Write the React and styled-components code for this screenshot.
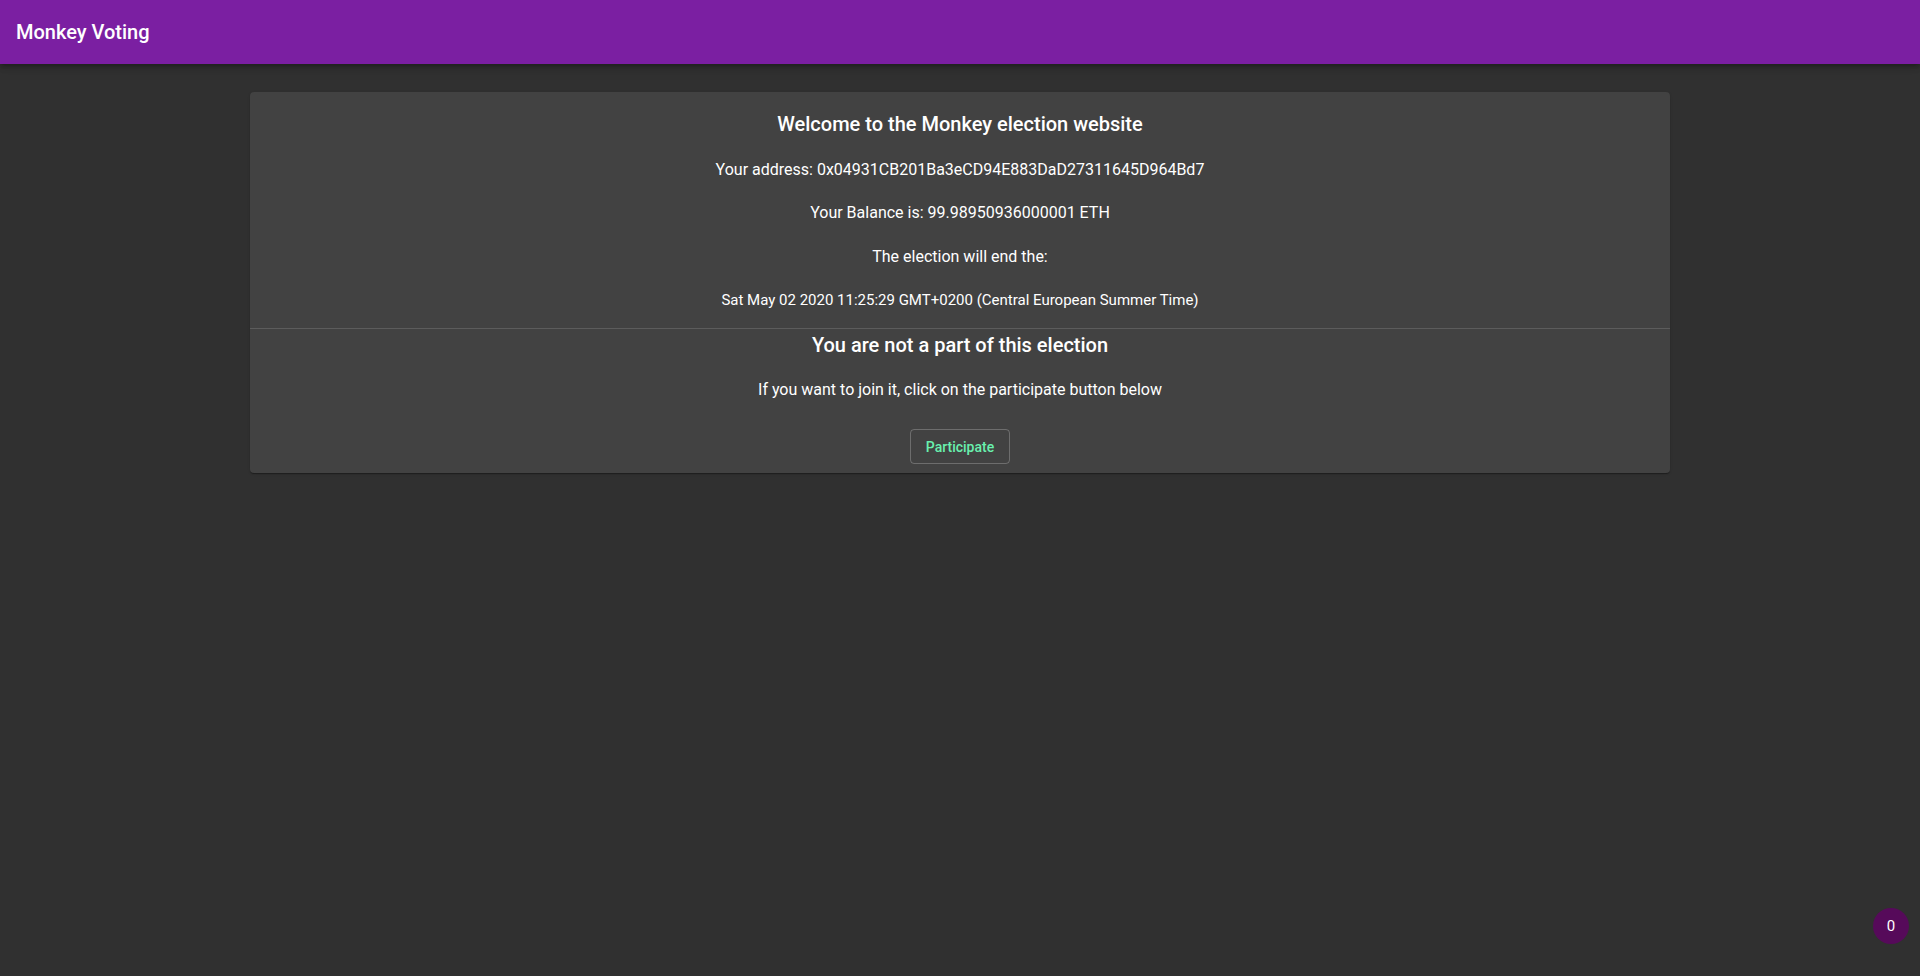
import React from 'react';
import styled, { createGlobalStyle } from 'styled-components';

const GlobalStyle = createGlobalStyle`
  html, body {
    margin: 0;
    padding: 0;
    background: #303030;
    font-family: Roboto, "Liberation Sans", Arial, sans-serif;
    color: #fff;
  }
  * {
    box-sizing: border-box;
  }
`;

const Page = styled.div`
  min-height: 100vh;
  background: #303030;
`;

const AppBar = styled.header`
  height: 64px;
  display: flex;
  align-items: center;
  padding: 0 16px;
  background: #7b1fa2;
  box-shadow: 0 2px 4px -1px rgba(0,0,0,0.2), 0 4px 5px 0 rgba(0,0,0,0.14), 0 1px 10px 0 rgba(0,0,0,0.12);
`;

const AppTitle = styled.h1`
  margin: 0;
  font-size: 20px;
  font-weight: 500;
  line-height: 1.6;
`;

const Main = styled.main`
  padding: 28px 250px;
`;

const Card = styled.section`
  background: #424242;
  border-radius: 4px;
  box-shadow: 0 2px 1px -1px rgba(0,0,0,0.2), 0 1px 1px 0 rgba(0,0,0,0.14), 0 1px 3px 0 rgba(0,0,0,0.12);
  text-align: center;
`;

const Section = styled.div`
  padding: ${({ $pad }) => $pad};
  display: flex;
  flex-direction: column;
  align-items: center;
`;

const Divider = styled.hr`
  margin: 0;
  border: none;
  height: 1px;
  background: rgba(255,255,255,0.14);
`;

const Heading = styled.h2`
  margin: 0;
  font-size: 20px;
  font-weight: 500;
  line-height: 32px;
`;

const Line = styled.p`
  margin: ${({ $top }) => $top}px 0 0;
  font-size: ${({ $small }) => ($small ? '15px' : '16px')};
  line-height: ${({ $small }) => ($small ? '20px' : '24px')};
`;

const OutlinedButton = styled.button`
  margin-top: 27px;
  height: 35px;
  padding: 5px 15px;
  background: transparent;
  border: 1px solid rgba(255,255,255,0.23);
  border-radius: 4px;
  color: #69f0ae;
  font-family: Roboto, "Liberation Sans", Arial, sans-serif;
  font-size: 14px;
  font-weight: 500;
  cursor: pointer;
`;

const Badge = styled.div`
  position: fixed;
  right: 11px;
  bottom: 32px;
  width: 36px;
  height: 36px;
  border-radius: 50%;
  background: #560a5a;
  display: flex;
  align-items: center;
  justify-content: center;
  font-size: 15px;
  color: #fff;
`;

const App = () => {
  return (
    <Page>
      <GlobalStyle />
      <AppBar>
        <AppTitle>Monkey Voting</AppTitle>
      </AppBar>
      <Main>
        <Card>
          <Section $pad="16px 16px 18px">
            <Heading>Welcome to the Monkey election website</Heading>
            <Line $top={18}>Your address: 0x04931CB201Ba3eCD94E883DaD27311645D964Bd7</Line>
            <Line $top={19}>Your Balance is: 99.98950936000001 ETH</Line>
            <Line $top={20}>The election will end the:</Line>
            <Line $top={21} $small>Sat May 02 2020 11:25:29 GMT+0200 (Central European Summer Time)</Line>
          </Section>
          <Divider />
          <Section $pad="0 16px 9px">
            <Heading>You are not a part of this election</Heading>
            <Line $top={17}>If you want to join it, click on the participate button below</Line>
            <OutlinedButton>Participate</OutlinedButton>
          </Section>
        </Card>
      </Main>
      <Badge>0</Badge>
    </Page>
  );
};

export default App;
